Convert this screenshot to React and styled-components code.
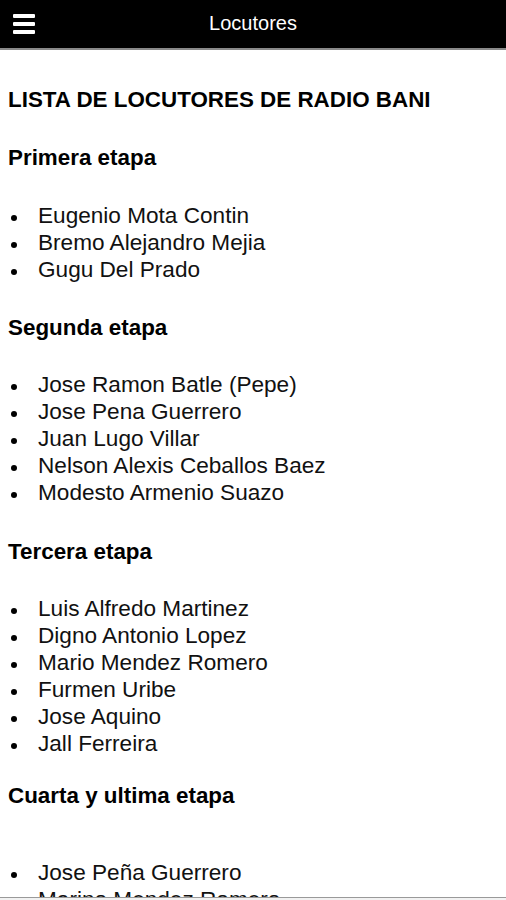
import React from 'react';
import styled, { createGlobalStyle } from 'styled-components';

const GlobalStyle = createGlobalStyle`
  html, body {
    margin: 0;
    padding: 0;
    background: #ffffff;
  }
  body {
    font-family: "Liberation Sans", Arial, Helvetica, sans-serif;
    color: #000000;
  }
`;

const Page = styled.div`
  width: 506px;
  min-height: 900px;
  background: #ffffff;
`;

const TopBar = styled.header`
  height: 48px;
  background: #000000;
  border-bottom: 2px solid #8a8a8a;
  display: flex;
  align-items: center;
  justify-content: center;
  position: relative;
`;

const MenuButton = styled.button`
  position: absolute;
  left: 13px;
  top: 14px;
  width: 22px;
  height: 20px;
  padding: 0;
  border: none;
  background: transparent;
  display: flex;
  flex-direction: column;
  justify-content: space-between;
  cursor: pointer;
`;

const MenuBar = styled.span`
  display: block;
  height: 4px;
  border-radius: 1px;
  background: #ffffff;
`;

const BarTitle = styled.h1`
  margin: -2px 0 0 0;
  color: #ffffff;
  font-size: 20px;
  font-weight: 400;
  line-height: 48px;
`;

const Content = styled.main`
  padding: 36px 8px 0 8px;
`;

const Heading = styled.h2`
  margin: ${(p) => p.$top ?? 31}px 0 0 0;
  font-size: 22.4px;
  font-weight: 700;
  line-height: 27px;
`;

const List = styled.ul`
  list-style: none;
  margin: ${(p) => p.$top ?? 30}px 0 0 0;
  padding: 0;
`;

const Item = styled.li`
  position: relative;
  padding-left: 30px;
  font-size: 22.6px;
  line-height: 27px;
  color: #111111;

  &::before {
    content: '';
    position: absolute;
    left: 3px;
    top: 13px;
    width: 6px;
    height: 6px;
    border-radius: 50%;
    background: #000000;
  }
`;

const BottomEdge = styled.div`
  position: fixed;
  left: 0;
  right: 0;
  bottom: 0;
  height: 2px;
  background: #f2f2f2;
  border-top: 1px solid #9a9a9a;
`;

const sections = [
  {
    title: 'Primera etapa',
    names: ['Eugenio Mota Contin', 'Bremo Alejandro Mejia', 'Gugu Del Prado'],
    listTop: 31,
  },
  {
    title: 'Segunda etapa',
    names: [
      'Jose Ramon Batle (Pepe)',
      'Jose Pena Guerrero',
      'Juan Lugo Villar',
      'Nelson Alexis Ceballos Baez',
      'Modesto Armenio Suazo',
    ],
  },
  {
    title: 'Tercera etapa',
    names: [
      'Luis Alfredo Martinez',
      'Digno Antonio Lopez',
      'Mario Mendez Romero',
      'Furmen Uribe',
      'Jose Aquino',
      'Jall Ferreira',
    ],
    headTop: 32,
  },
  {
    title: 'Cuarta y ultima etapa',
    names: ['Jose Peña Guerrero', 'Marino Mendez Romero', 'Luis Alfredo Martinez'],
    headTop: 25,
    listTop: 50,
  },
];

const App = () => {
  return (
    <Page>
      <GlobalStyle />
      <TopBar>
        <MenuButton aria-label="Menu">
          <MenuBar />
          <MenuBar />
          <MenuBar />
        </MenuButton>
        <BarTitle>Locutores</BarTitle>
      </TopBar>

      <Content>
        <Heading $top={0}>LISTA DE LOCUTORES DE RADIO BANI</Heading>
        {sections.map((s) => (
          <React.Fragment key={s.title}>
            <Heading $top={s.headTop}>{s.title}</Heading>
            <List $top={s.listTop}>
              {s.names.map((n) => (
                <Item key={n}>{n}</Item>
              ))}
            </List>
          </React.Fragment>
        ))}
      </Content>
      <BottomEdge />
    </Page>
  );
};

export default App;
